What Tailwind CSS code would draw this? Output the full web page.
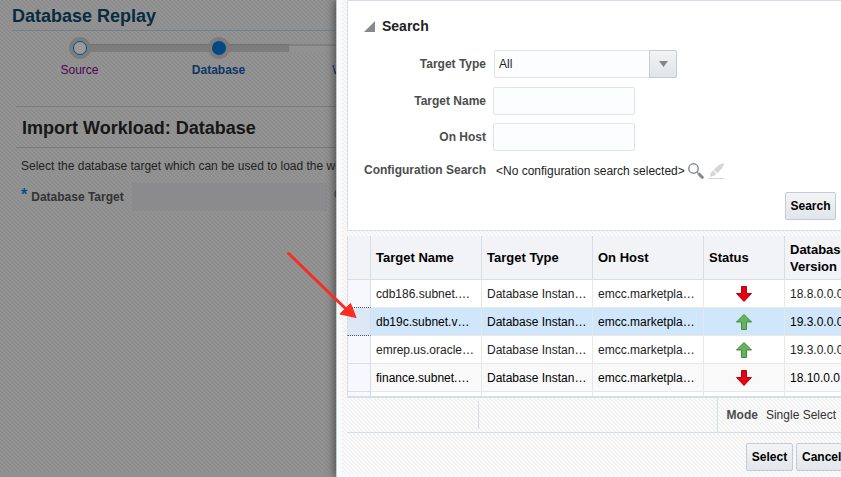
<!DOCTYPE html>
<html lang="en">
<head>
<meta charset="utf-8">
<meta name="viewport" content="width=device-width, initial-scale=1">
<title>Database Replay</title>
<script src="https://cdn.jsdelivr.net/npm/@tailwindcss/browser@4"></script>
</head>
<body class="relative h-screen overflow-hidden bg-[#909090] bg-[linear-gradient(45deg,#8d8d8d_25%,#939393_25%_50%,#8d8d8d_50%_75%,#939393_75%)] bg-size-[4px_4px] font-['Liberation_Sans',Arial,sans-serif] text-[12px] leading-4 text-[#222]">

<!-- Page behind the dialog -->
<main class="pl-3">
  <h1 class="h-[31px] border-b border-[#77838c] pt-1 text-[18px] leading-6 font-bold text-[#062c40]">Database Replay</h1>
  <nav aria-label="Progress" class="relative h-[75px] overflow-hidden pt-1.5">
    <div class="absolute top-[13px] left-[68px] flex w-full">
      <div class="h-2 w-[209px] shrink-0 border-t border-[#717171] bg-[#7c7c7c]"></div>
      <div class="h-2 grow border-t-2 border-[#808080] bg-[#919191]"></div>
    </div>
    <ol class="relative -ml-0.5 flex">
      <li class="flex w-[139px] shrink-0 flex-col items-center gap-[3px]">
        <span class="flex size-[22px] items-center justify-center rounded-full bg-[#7c7c7c]"><span class="size-[14px] rounded-full border border-[#034f8f] bg-[#9a9a9a]"></span></span>
        <a href="#source" class="text-[#4b0651]">Source</a>
      </li>
      <li class="flex w-[139px] shrink-0 flex-col items-center gap-[3px]">
        <span class="flex size-[22px] items-center justify-center rounded-full bg-[#7c7c7c]"><span class="size-[14px] rounded-full bg-[#024986]"></span></span>
        <span class="font-bold text-[#0b3765]">Database</span>
      </li>
      <li class="flex w-[139px] shrink-0 flex-col items-center gap-[3px]">
        <span class="size-[22px]"></span>
        <a href="#workload" class="text-[#0b3765]">Workload</a>
      </li>
    </ol>
  </nav>
  <section class="pl-1">
    <h2 class="h-[42px] border-y border-[#7a7a7a] pt-[9px] pl-1.5 text-[18px] leading-6 font-bold text-[#161616]">Import Workload: Database</h2>
    <p class="pt-2.5 pl-[5px] whitespace-nowrap">Select the database target which can be used to load the workload.</p>
    <div class="flex items-center gap-[7px] pt-[9px] pl-[5px]">
      <label for="target" class="flex w-[104px] items-center whitespace-nowrap font-bold text-[#333]"><span class="-mt-1 mr-1 text-[16px] text-[#034f8f]">*</span>Database Target</label>
      <input id="target" type="text" class="h-7 w-[195px] bg-[#8b8b8e] outline-none">
      <button type="button" aria-label="Find database target" class="-mt-[3px]">
        <svg class="size-4" viewBox="0 0 16 16" fill="none" stroke="#555" stroke-width="1.5"><circle cx="5.5" cy="6" r="4.5"/><path d="M9 9.500l6 5.500" stroke-width="2.500"/></svg>
      </button>
    </div>
  </section>
</main>

<!-- Target selector dialog -->
<div role="dialog" aria-label="Select target" class="absolute inset-y-0 right-0 left-[336px] overflow-hidden border-l border-[#c4cdd6] bg-[#fafafa] pl-[5px] shadow-[-2px_0_8px_rgba(0,0,0,0.45)]">
  <div class="h-[475px] bg-[linear-gradient(45deg,#f2f2f2_25%,#fbfbfb_25%_50%,#f2f2f2_50%_75%,#fbfbfb_75%)] bg-size-[4px_4px] pl-[5px]">

    <form class="border-y border-l border-[#d6dfe6] bg-white pt-[17px] pb-[10px]">
      <h3 class="flex items-center gap-[7px] pl-4 text-[14px] leading-4 font-bold text-[#222]">
        <svg class="size-[11px]" viewBox="0 0 11 11"><path d="M11 0V11H0z" fill="#848a8f"/></svg>Search
      </h3>
      <div class="mt-4 grid grid-cols-[138px_1fr] gap-x-[7px] gap-y-2">
        <label for="type" class="self-center text-right font-bold text-[#4d4d4d]">Target Type</label>
        <div class="relative ml-px w-[183px]">
          <select id="type" class="block h-7 w-full appearance-none rounded-xs border border-[#dfe4e7] bg-[#fcfdfe] pl-1 text-[#222]"><option>All</option></select>
          <span class="pointer-events-none absolute inset-y-0 right-0 flex w-7 items-center justify-center rounded-r-xs border border-[#c0ccd8] bg-linear-to-b from-[#f1f3f4] to-[#e1e5e9]"><svg class="h-1.5 w-[9px]" viewBox="0 0 9 6"><path d="M0 0h9L4.500 6z" fill="#81868b"/></svg></span>
        </div>
        <label for="name" class="self-center text-right font-bold text-[#4d4d4d]">Target Name</label>
        <input id="name" type="text" class="mt-px h-7 w-[142px] rounded-xs border border-[#dfe4e7] bg-[#fcfdfe]">
        <label for="host" class="self-center text-right font-bold text-[#4d4d4d]">On Host</label>
        <input id="host" type="text" class="h-7 w-[142px] rounded-xs border border-[#dfe4e7] bg-[#fcfdfe]">
        <span class="mt-[3px] text-right font-bold text-[#4d4d4d]">Configuration Search</span>
        <div class="flex items-center gap-[3px] pt-1 pl-[3px] whitespace-nowrap">&lt;No configuration search selected&gt;
          <button type="button" aria-label="Search configurations"><svg class="size-4" viewBox="0 0 16 16" fill="none"><circle cx="5.500" cy="5.500" r="4.700" stroke="#888e93" stroke-width="1.500"/><path d="M9 9l1.500 1.500" stroke="#888e93" stroke-width="1.500"/><path d="M10.500 10.500l4.700 4.700" stroke="#81878c" stroke-width="3"/></svg></button>
          <button type="button" aria-label="Edit configuration search" disabled><svg class="ml-px size-4" viewBox="0 0 16 16" fill="#d5d7d9"><path d="M16 0C12.500.3 9 3 5.700 6.700l3.600 3.600C13 7 15.700 4 16 0zM5 7.500L2.500 10 2 13.700l3.700-.7 2.800-1.900zM0 15h16v1H0z"/></svg></button>
        </div>
      </div>
      <div class="mt-[13px] flex justify-end pr-[5px]">
        <button type="button" class="h-7 w-[51px] rounded-xs border border-[#c0ccd8] bg-linear-to-b from-[#f3f4f5] to-[#e2e6ea] font-bold text-black">Search</button>
      </div>
    </form>

    <div class="mt-[5px] h-[162px] overflow-hidden border-b-2 border-[#d6dfe6] bg-white">
      <table class="w-[543px] table-fixed border-separate border-spacing-0 text-left whitespace-nowrap">
        <colgroup><col class="w-6"><col class="w-[111px]"><col class="w-[111px]"><col class="w-[111px]"><col class="w-[81px]"><col></colgroup>
        <thead>
          <tr class="h-11 bg-[#f2f3f7] text-[13px] leading-[17px] text-black *:border-r *:border-b *:border-[#d6dfe6]">
            <th class="border-l"></th><th scope="col" class="pl-[5px]">Target Name</th><th scope="col" class="pl-[5px]">Target Type</th><th scope="col" class="pl-[5px]">On Host</th><th scope="col" class="pl-[5px]">Status</th><th scope="col" class="pl-[5px]">Database<br>Version</th>
          </tr>
        </thead>
        <tbody>
          <tr class="h-7 *:border-r *:border-b *:border-[#e8e8e8]">
            <td class="border-l border-x-[#d6dfe6]! border-b-[#555]! bg-[#f6f8fd] [border-bottom-style:dotted]!"></td><td class="pl-[5px]">cdb186.subnet.…</td><td class="pl-[5px]">Database Instan…</td><td class="pl-[5px]">emcc.marketpla…</td>
            <td><svg class="mx-auto size-4" viewBox="0 0 16 16" role="img" aria-label="Down"><path d="M5.500.5h5v7h5L8 15.500.5 7.500h5z" fill="#e60012" stroke="#a90a12"/></svg></td><td class="pl-[5px]">18.8.0.0.0</td>
          </tr>
          <tr class="h-7 bg-[#d0e7fb] text-black *:border-r *:border-b *:border-[#e8e8e8]" aria-selected="true">
            <td class="border-l border-x-[#d6dfe6]! border-b-[#555]! bg-[#dce8f5] [border-bottom-style:dotted]!"></td><td class="pl-[5px]">db19c.subnet.v…</td><td class="pl-[5px]">Database Instan…</td><td class="pl-[5px]">emcc.marketpla…</td>
            <td><svg class="mx-auto size-4" viewBox="0 0 16 16" role="img" aria-label="Up"><path d="M8 .5L15.500 8h-5v7.500h-5V8h-5z" fill="#66b35f" stroke="#3f8a3b"/></svg></td><td class="pl-[5px]">19.3.0.0.0</td>
          </tr>
          <tr class="h-7 *:border-r *:border-b *:border-[#e8e8e8]">
            <td class="border-l border-[#d6dfe6]! bg-[#f6f8fd]"></td><td class="pl-[5px]">emrep.us.oracle…</td><td class="pl-[5px]">Database Instan…</td><td class="pl-[5px]">emcc.marketpla…</td>
            <td><svg class="mx-auto size-4" viewBox="0 0 16 16" role="img" aria-label="Up"><path d="M8 .5L15.500 8h-5v7.500h-5V8h-5z" fill="#66b35f" stroke="#3f8a3b"/></svg></td><td class="pl-[5px]">19.3.0.0.0</td>
          </tr>
          <tr class="h-7 bg-[#f9f9f9] text-black *:border-r *:border-b *:border-[#e8e8e8]">
            <td class="border-l border-[#d6dfe6]! bg-[#f6f8fd]"></td><td class="pl-[5px]">finance.subnet.…</td><td class="pl-[5px]">Database Instan…</td><td class="pl-[5px]">emcc.marketpla…</td>
            <td><svg class="mx-auto size-4" viewBox="0 0 16 16" role="img" aria-label="Down"><path d="M5.500.5h5v7h5L8 15.500.5 7.500h5z" fill="#e60012" stroke="#a90a12"/></svg></td><td class="pl-[5px]">18.10.0.0.0</td>
          </tr>
          <tr class="h-7 *:border-r *:border-[#e8e8e8]"><td class="border-l border-[#d6dfe6]! bg-[#f6f8fd]"></td><td></td><td></td><td></td><td></td><td></td></tr>
        </tbody>
      </table>
    </div>

    <div class="flex h-[35px] justify-between border-b border-[#d6dfe6]">
      <div class="my-[3px] w-[132px] border-r border-[#d6dfe6]"></div>
      <div class="flex items-center gap-2 border-l border-[#d6dfe6] pr-[5px] pl-[9px] whitespace-nowrap"><span class="font-bold text-[#4d4d4d]">Mode</span><span class="text-[#333]">Single Select</span></div>
    </div>
    <div class="-mr-3 flex justify-end gap-[3px] pt-2.5">
      <button type="button" class="h-7 w-[47px] rounded-xs border border-[#c0ccd8] bg-linear-to-b from-[#f3f4f5] to-[#e2e6ea] font-bold text-black">Select</button>
      <button type="button" class="h-7 w-[57px] rounded-xs border border-[#c0ccd8] bg-linear-to-b from-[#f3f4f5] to-[#e2e6ea] pl-[5px] text-left font-bold text-black">Cancel</button>
    </div>
  </div>
</div>

<!-- Callout arrow to the selected row -->
<svg class="pointer-events-none absolute top-[250px] left-[286px] h-[70px] w-[72px]" viewBox="0 0 72 70" aria-hidden="true"><path d="M2.500 3.500L60 59" stroke="#fb2c20" stroke-width="3" stroke-linecap="round"/><path d="M70 67.500L54 64 64.500 53.500z" fill="#fb2c20" stroke="#fb2c20"/></svg>
</body>
</html>
